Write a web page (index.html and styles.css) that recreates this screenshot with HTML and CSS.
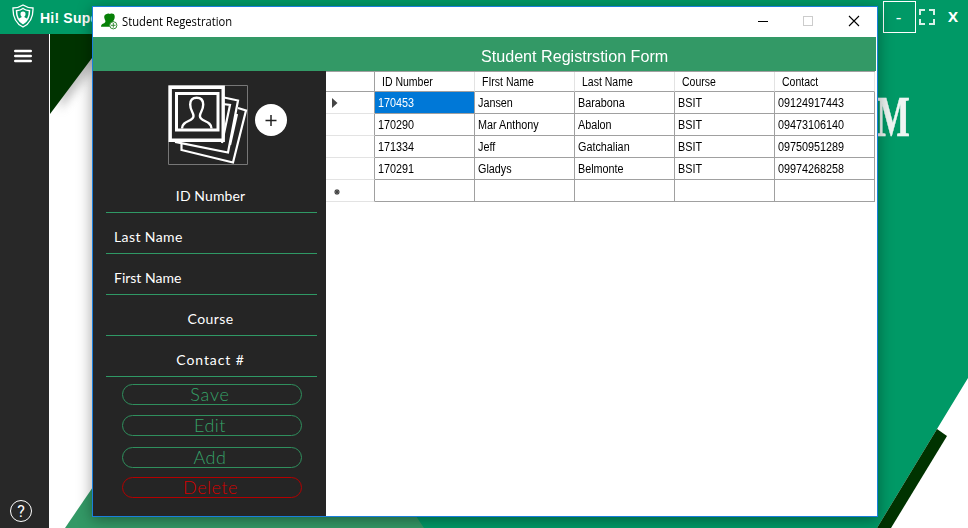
FILE: index.html
```html
<!DOCTYPE html>
<html lang="en">
<head>
<meta charset="utf-8">
<title>Student Regestration</title>
<link rel="stylesheet" href="styles.css">
</head>
<body>
<div class="app">
  <svg class="backdrop" viewBox="0 0 968 528" aria-hidden="true">
    <defs><filter id="soft" x="-20%" y="-20%" width="150%" height="150%"><feGaussianBlur stdDeviation="5"/></filter></defs>
    <path fill="#999" opacity=".6" filter="url(#soft)" d="M60 34h60L60 110z"/>
    <path fill="#030" d="M50 34h60L50 114z"/>
    <path fill="#396" d="M65 528L125 440H820V528z"/>
    <path fill="#096" d="M600 34H968V378L937 429 877 528H424L384 468z"/>
    <path fill="#030" d="M937 429L947 436 891 528H877z"/>
  </svg>
  <header class="topbar">
    <svg class="shield" viewBox="0 0 22 24" fill="none" stroke="#fff"><path stroke-width="1.3" d="M11 1C8 3 5 4 1 4c-.3 9 2 15 10 19 8-4 10.300-10 10-19-4 0-7-1-10-3z"/><path stroke-width="1.500" d="M11 4.500C9 6 7 6.500 4.500 6.800c0 6 1.500 10 6.500 12.700 5-2.700 6.500-6.700 6.500-12.700C15 6.500 13 6 11 4.500z"/><path fill="#fff" stroke="none" d="M11 7.500a2.500 2.500 0 0 0-2.500 2.700c0 1.300.7 2.100 1.400 2.600-.3 1-2.300 1-3.300 2.400 1 1.800 2.500 3 4.400 4 1.900-1 3.400-2.200 4.400-4-1-1.400-3-1.400-3.300-2.400.8-.5 1.400-1.300 1.400-2.600A2.500 2.500 0 0 0 11 7.500z"/></svg>
    <span class="greeting">Hi! Super</span>
    <div class="controls">
      <span class="min">-</span>
      <svg class="expand" viewBox="0 0 16 16" fill="none" stroke="#d9f0e8" stroke-width="2"><path d="M1 6V1H6M10 1H15V6M15 10V15H10M6 15H1V10"/></svg>
      <span class="close">X</span>
    </div>
  </header>
  <div class="body">
    <aside class="rail">
      <svg class="menu" viewBox="0 0 18 14" stroke="#fff" stroke-width="2.400" stroke-linecap="round"><path d="M1.200 2H16.800M1.200 7H16.800M1.200 12H16.800"/></svg>
      <span class="help">?</span>
    </aside>
    <div class="headline">M</div>
  </div>

  <section class="window">
    <div class="titlebar">
      <svg class="people" viewBox="0 0 17 17"><path fill="#078007" d="M5 1.200C7 0 8.300.3 9 1c2-1 4.500-.3 4.700 2 .2 2-.5 3.500-1.200 4.500-.3 1 .5 1.500 2 2.200v4H0c0-2 1-3 3.200-3.500C5 9 4.500 8 3.800 6.500 2.800 4 3 2 5 1.200z"/><circle cx="12.300" cy="12.300" r="3.600" fill="#fff" stroke="#398e39"/><path stroke="#398e39" d="M12.300 10v4.600M10 12.300h4.600"/></svg>
      <span class="title">Student Regestration</span>
      <svg class="winctl" viewBox="0 0 104 12" fill="none" shape-rendering="crispEdges"><path stroke="#000" d="M0 6.500H10"/><path stroke="#ccc" d="M45.500 1.500h9v9h-9z"/><path shape-rendering="auto" stroke="#000" stroke-width="1.100" d="M91 1l10 10M101 1L91 11"/></svg>
    </div>
    <div class="banner"><span>Student Registrstion Form</span></div>
    <div class="content">
      <form class="panel">
        <div class="photo">
          <svg class="picture" viewBox="0 0 80 80" fill="none" stroke="#fff">
            <path stroke="#777" d="M.5.500h79v79H.5z"/>
            <path stroke-width="2.200" d="M56 12.500L70 15.500 60 67.500 8 57V54M55 19l7 1-8 38"/>
            <path stroke-width="2.200" d="M70 23L78 25.500 65 77.500 13.500 65V59M69 29L62 60"/>
            <path stroke-width="3.400" fill="#252525" d="M2.200 2.200h53v53h-53z"/>
            <path stroke-width="3" d="M8.500 8.500H50v36.500H8.500z"/>
            <path stroke-width="2.400" d="M14 43.500C14 35 25.500 37 25.500 31 25.500 27 22.200 26 22.200 19.500 22.200 15 24.500 12.700 28.700 12.700S35.200 15 35.200 19.500C35.200 26 31.900 27 31.900 31 31.900 37 43.500 35 43.500 43.500"/>
          </svg>
          <span class="plus"><svg viewBox="0 0 32 32"><path stroke="#222" stroke-width="1.500" d="M16 11v11M10.500 16.500h11"/></svg></span>
        </div>
        <div class="field center"><span>ID Number</span></div>
        <div class="field"><span>Last Name</span></div>
        <div class="field first"><span>First Name</span></div>
        <div class="field center"><span>Course</span></div>
        <div class="field center contact"><span>Contact #</span></div>
        <div class="actions">
          <button type="button">Save</button>
          <button type="button">Edit</button>
          <button type="button">Add</button>
          <button type="button" class="danger">Delete</button>
        </div>
      </form>
      <div class="listing">
        <table>
          <thead><tr><th class="mark"></th><th><span>ID Number</span></th><th><span>FIrst Name</span></th><th><span>Last Name</span></th><th><span>Course</span></th><th><span>Contact</span></th></tr></thead>
          <tbody>
            <tr><td class="mark"><svg class="arrow" viewBox="0 0 6 10"><path fill="#444" d="M0 0l5.500 5L0 10z"/></svg></td><td class="selected"><span>170453</span></td><td><span>Jansen</span></td><td><span>Barabona</span></td><td><span>BSIT</span></td><td><span>09124917443</span></td></tr>
            <tr><td class="mark"></td><td><span>170290</span></td><td><span>Mar Anthony</span></td><td><span>Abalon</span></td><td><span>BSIT</span></td><td><span>09473106140</span></td></tr>
            <tr><td class="mark"></td><td><span>171334</span></td><td><span>Jeff</span></td><td><span>Gatchalian</span></td><td><span>BSIT</span></td><td><span>09750951289</span></td></tr>
            <tr><td class="mark"></td><td><span>170291</span></td><td><span>Gladys</span></td><td><span>Belmonte</span></td><td><span>BSIT</span></td><td><span>09974268258</span></td></tr>
            <tr><td class="mark"><svg class="star" viewBox="0 0 6 6"><path stroke="#444" stroke-width="1.100" d="M3 0v6M0 3h6M1 1l4 4M5 1L1 5"/></svg></td><td></td><td></td><td></td><td></td><td></td></tr>
          </tbody>
        </table>
      </div>
    </div>
  </section>
</div>
</body>
</html>
```
FILE: styles.css
```css
* { box-sizing: border-box; }
body { margin: 0; font-family: "Liberation Sans", Arial, sans-serif; }
svg { display: block; flex: none; }
.app { position: relative; width: 968px; height: 528px; overflow: hidden; background: #fff; display: flex; flex-direction: column; }
.backdrop { position: absolute; inset: 0; width: 968px; height: 528px; }
.topbar { position: relative; height: 34px; background: #096; color: #fff; display: flex; align-items: center; padding-left: 12px; flex: none; }
.shield { width: 22px; height: 24px; margin-top: -2px; }
.greeting { font-weight: bold; font-size: 14px; margin: 2px 0 0 6px; letter-spacing: .2px; }
.controls { margin-left: auto; display: flex; align-items: center; height: 34px; padding-right: 10px; }
.min { width: 33px; height: 32px; border: 1px solid #fff; text-align: center; line-height: 31px; font-size: 17px; padding-right: 2px; }
.expand { width: 16px; height: 16px; margin-left: 3px; }
.close { font-weight: bold; font-size: 15px; margin-left: 13px; margin-top: -3px; font-family: "Open Sans", sans-serif; }
.body { position: relative; flex: 1; display: flex; justify-content: space-between; }
.rail { width: 49px; background: #282828; display: flex; flex-direction: column; justify-content: space-between; padding: 15px 0 6px 14px; }
.menu { width: 18px; height: 14px; }
.help { width: 22px; height: 22px; margin-left: -4px; border: 1px solid #fff; border-radius: 50%; color: #fff; font: 16px/21px Roboto, sans-serif; text-align: center; }
.headline { color: #eef5f2; font: bold 56px/60px "Liberation Serif", serif; margin: 53px 58px 0 0; transform: scaleX(.63); transform-origin: right; -webkit-text-stroke: .6px #eef5f2; }

.window { position: absolute; left: 92px; top: 6px; width: 786px; height: 511px; border: 1px solid #1a7fdc; background: #fff; box-shadow: 0 3px 14px rgba(0,0,0,.38); display: flex; flex-direction: column; }
.titlebar { height: 30px; display: flex; align-items: center; padding: 0 17px 0 8px; flex: none; }
.people { width: 17px; height: 17px; margin-top: -1px; }
.title { font: 12px/16px "Open Sans", sans-serif; margin-left: 4px; white-space: nowrap; transform: scaleX(.935); transform-origin: left; }
.winctl { width: 104px; height: 12px; margin: -2px -2px 0 auto; }
.banner { height: 34px; margin-right: 1px; background: #396; color: #fff; font-size: 17px; line-height: 39px; padding-left: 388px; flex: none; }
.banner span { display: inline-block; transform: scaleX(.948); transform-origin: left; white-space: nowrap; }
.content { flex: 1; display: flex; }
.panel { width: 233px; background: #252525; padding: 14px 9px 0 13px; font-family: Lato, sans-serif; color: #fff; }
.photo { display: flex; align-items: center; gap: 7px; margin-left: 62px; height: 80px; }
.picture { width: 80px; height: 80px; }
.plus { width: 32px; height: 32px; border-radius: 50%; background: #fff; margin-top: -10px; }
.field { height: 41px; border-bottom: 1px solid #2f9965; font-size: 14px; line-height: 17px; padding: 15px 8px 0; letter-spacing: .4px; }
.field.first { letter-spacing: 0; }
.photo + .field { height: 48px; padding-top: 22px; letter-spacing: .1px; }
.field.center { text-align: center; padding-right: 10px; }
.field.contact { letter-spacing: .9px; }
.actions { padding: 7px 15px 0 16px; display: grid; grid-template-rows: 31px 32px 30px 21px; }
.actions button { height: 21px; padding: 0 4px 0 0; border: 1px solid #2f8f5d; border-radius: 11px; background: none; color: #35a268; font: 300 18px/17px Lato, sans-serif; letter-spacing: .5px; }
.actions button:first-child { letter-spacing: .8px; }
.actions button.danger { color: #d40000; border-color: #b40000; padding-right: 3px; }
.listing { flex: 1; }
table { border-collapse: separate; border-spacing: 0; table-layout: fixed; width: 549px; border-top: 1px solid #a0a0a0; }
th, td { width: 100px; padding: 0; text-align: left; font-weight: normal; font-size: 12px; line-height: 18px; white-space: nowrap; border-right: 1px solid #a0a0a0; border-bottom: 1px solid #a0a0a0; }
th { height: 20px; padding: 1px 0 0 7px; border-right-color: #e3e3e3; }
td { height: 22px; padding: 2px 0 0 3px; vertical-align: top; }
td span, th span { display: block; transform: scaleX(.9); transform-origin: left; }
th span { transform: scaleX(.875); }
.mark { width: 49px; border-right-color: #a0a0a0; }
td.mark { border-bottom-color: #e3e3e3; }
.selected { background: #0078d7; color: #fff; }
.arrow { width: 6px; height: 10px; margin: 4px 0 0 3px; }
.star { width: 6px; height: 6px; margin: 7px 0 0 5px; }
```
